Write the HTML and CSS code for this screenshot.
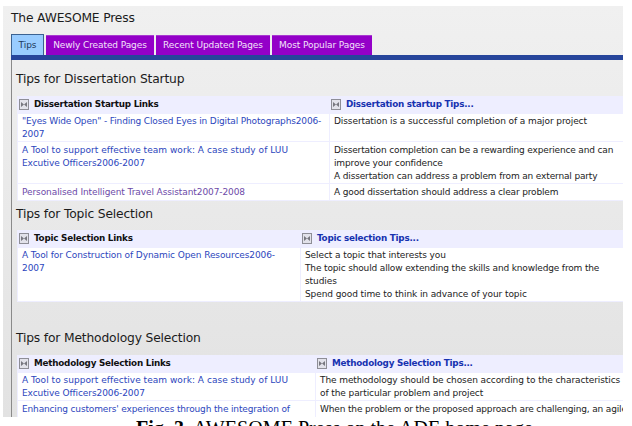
FILE: index.html
```html
<!DOCTYPE html>
<html lang="en">
<head>
  <meta charset="UTF-8">
  <title>The AWESOME Press</title>
  <link rel="stylesheet" href="styles.css">
</head>
<body>

  <svg width="0" height="0" class="defs">
    <symbol id="sort" viewBox="0 0 10 11">
      <rect x="0.5" y="0.5" width="9" height="10" fill="#e2e2ea" stroke="#8e8e96"/>
      <path d="M2 3l3 2.5L2 8zM8 3L5 5.5 8 8z" fill="#77777f"/>
    </symbol>
  </svg>

  <div class="page">
    <h1>The AWESOME Press</h1>

    <ul class="tabs">
      <li class="active">Tips</li>
      <li class="created">Newly Created Pages</li>
      <li class="updated">Recent Updated Pages</li>
      <li class="popular">Most Popular Pages</li>
    </ul>

    <div class="content">
      <h2 class="first">Tips for Dissertation Startup</h2>
      <div class="table startup">
        <div class="row head">
          <div><svg class="sort"><use href="#sort"/></svg>Dissertation Startup Links</div>
          <div><svg class="sort"><use href="#sort"/></svg><a>Dissertation startup Tips...</a></div>
        </div>
        <div class="row two">
          <div><a class="tight">"Eyes Wide Open" - Finding Closed Eyes in Digital Photographs2006-<br>2007</a></div>
          <div>Dissertation is a successful completion of a major project</div>
        </div>
        <div class="row three">
          <div><a><span class="loose">A Tool to support effective team work: A case study of LUU</span><br>Excutive Officers2006-2007</a></div>
          <div class="tight">Dissertation completion can be a rewarding experience and can<br>improve your confidence<br>A dissertation can address a problem from an external party</div>
        </div>
        <div class="row one">
          <div><a class="visited">Personalised Intelligent Travel Assistant2007-2008</a></div>
          <div class="tight">A good dissertation should address a clear problem</div>
        </div>
      </div>

      <h2 class="second">Tips for Topic Selection</h2>
      <div class="table topic">
        <div class="row head">
          <div><svg class="sort"><use href="#sort"/></svg>Topic Selection Links</div>
          <div><svg class="sort"><use href="#sort"/></svg><a>Topic selection Tips...</a></div>
        </div>
        <div class="row four">
          <div><a>A Tool for Construction of Dynamic Open Resources2006-<br>2007</a></div>
          <div>Select a topic that interests you<br><span class="tight">The topic should allow extending the skills and knowledge from the</span><br>studies<br>Spend good time to think in advance of your topic</div>
        </div>
      </div>

      <h2 class="third">Tips for Methodology Selection</h2>
      <div class="table methodology">
        <div class="row head">
          <div><svg class="sort"><use href="#sort"/></svg>Methodology Selection Links</div>
          <div><svg class="sort"><use href="#sort"/></svg><a>Methodology Selection Tips...</a></div>
        </div>
        <div class="row two">
          <div><a><span class="loose">A Tool to support effective team work: A case study of LUU</span><br>Excutive Officers2006-2007</a></div>
          <div>The methodology should be chosen according to the characteristics<br>of the particular problem and project</div>
        </div>
        <div class="row one">
          <div><a class="tight">Enhancing customers' experiences through the integration of</a></div>
          <div class="tight">When the problem or the proposed approach are challenging, an agile</div>
        </div>
      </div>
    </div>
  </div>

  <p class="caption"><b>Fig. 3.</b> AWESOME Press on the ADE home page</p>

</body>
</html>
```
FILE: styles.css
```css
body {
  margin: 0;
  height: 426px;
  overflow: hidden;
  background: #fff;
  font-family: "DejaVu Sans", Verdana, sans-serif;
  font-size: 9px;
  letter-spacing: -0.09px;
  color: #222;
  white-space: nowrap;
}
.defs {
  display: block;
}
.page {
  box-sizing: border-box;
  width: 620px;
  height: 411px;
  margin: 6px 0 0 3px;
  padding-left: 8px;
  overflow: hidden;
  background: linear-gradient(#f0f0f0, #e2e2e2);
}
h1, h2 {
  margin: 0;
  font-size: 12.3px;
  font-weight: normal;
  letter-spacing: -0.17px;
  color: #1c1c1c;
}
h1 {
  height: 28px;
  line-height: 24px;
}
.tabs {
  display: flex;
  align-items: flex-end;
  gap: 2px;
  height: 21px;
  margin: 0;
  padding: 0;
  list-style: none;
  border-bottom: 5px solid #27459b;
}
.tabs li {
  box-sizing: border-box;
  height: 20px;
  border-top: 1px solid #a83ad0;
  background: #9400c8;
  color: #f3e3fa;
  text-align: center;
  line-height: 18px;
}
.tabs .active {
  width: 33px;
  height: 21px;
  border: 1px solid #3c6291;
  border-bottom: 0;
  background: #99ccff;
  color: #203a5c;
  line-height: 20px;
}
.tabs .created {
  width: 108px;
}
.tabs .updated {
  width: 114px;
}
.tabs .popular {
  width: 100px;
}
.content {
  height: 360px;
  padding-left: 5px;
  border-left: 1px solid #8a8a8a;
}
h2 {
  margin-left: -1px;
}
.first {
  height: 36px;
  line-height: 39px;
}
.second {
  height: 29px;
  line-height: 26px;
}
.third {
  height: 53px;
  line-height: 73px;
}
.table {
  border-left: 1px solid #eeeeff;
}
.row {
  display: grid;
  grid-template-columns: 311px 1fr;
  box-sizing: border-box;
  border-bottom: 1px solid #eeeeff;
  background: #fff;
  line-height: 13px;
}
.topic .row {
  grid-template-columns: 282px 1fr;
}
.methodology .row {
  grid-template-columns: 297px 1fr;
}
.row > div {
  padding: 1px 0 0 4px;
}
.row > div + div {
  border-left: 1px solid #eeeeff;
}
.row.head {
  height: 18px;
  background: #eeeeff;
  font-size: 8.8px;
  font-weight: bold;
  letter-spacing: -0.23px;
  color: #111;
}
.row.head > div {
  display: flex;
  align-items: center;
  gap: 5px;
  padding: 0 0 0 1px;
}
.sort {
  width: 10px;
  height: 11px;
}
.one {
  height: 17px;
}
.two {
  height: 28px;
}
.three {
  height: 42px;
}
.four {
  height: 54px;
}
.one > div, .three > div {
  padding-top: 2px;
}
.tight {
  letter-spacing: -0.15px;
}
.loose {
  letter-spacing: 0.03px;
}
a {
  color: #2c46bd;
}
.head a {
  color: #1732b0;
}
a.visited {
  color: #6d4aa8;
}
.caption {
  margin: -1px 0 0 136px;
  font-family: "Liberation Serif", "Times New Roman", serif;
  font-size: 20.1px;
  letter-spacing: 0;
  line-height: 24px;
  color: #000;
}
```
